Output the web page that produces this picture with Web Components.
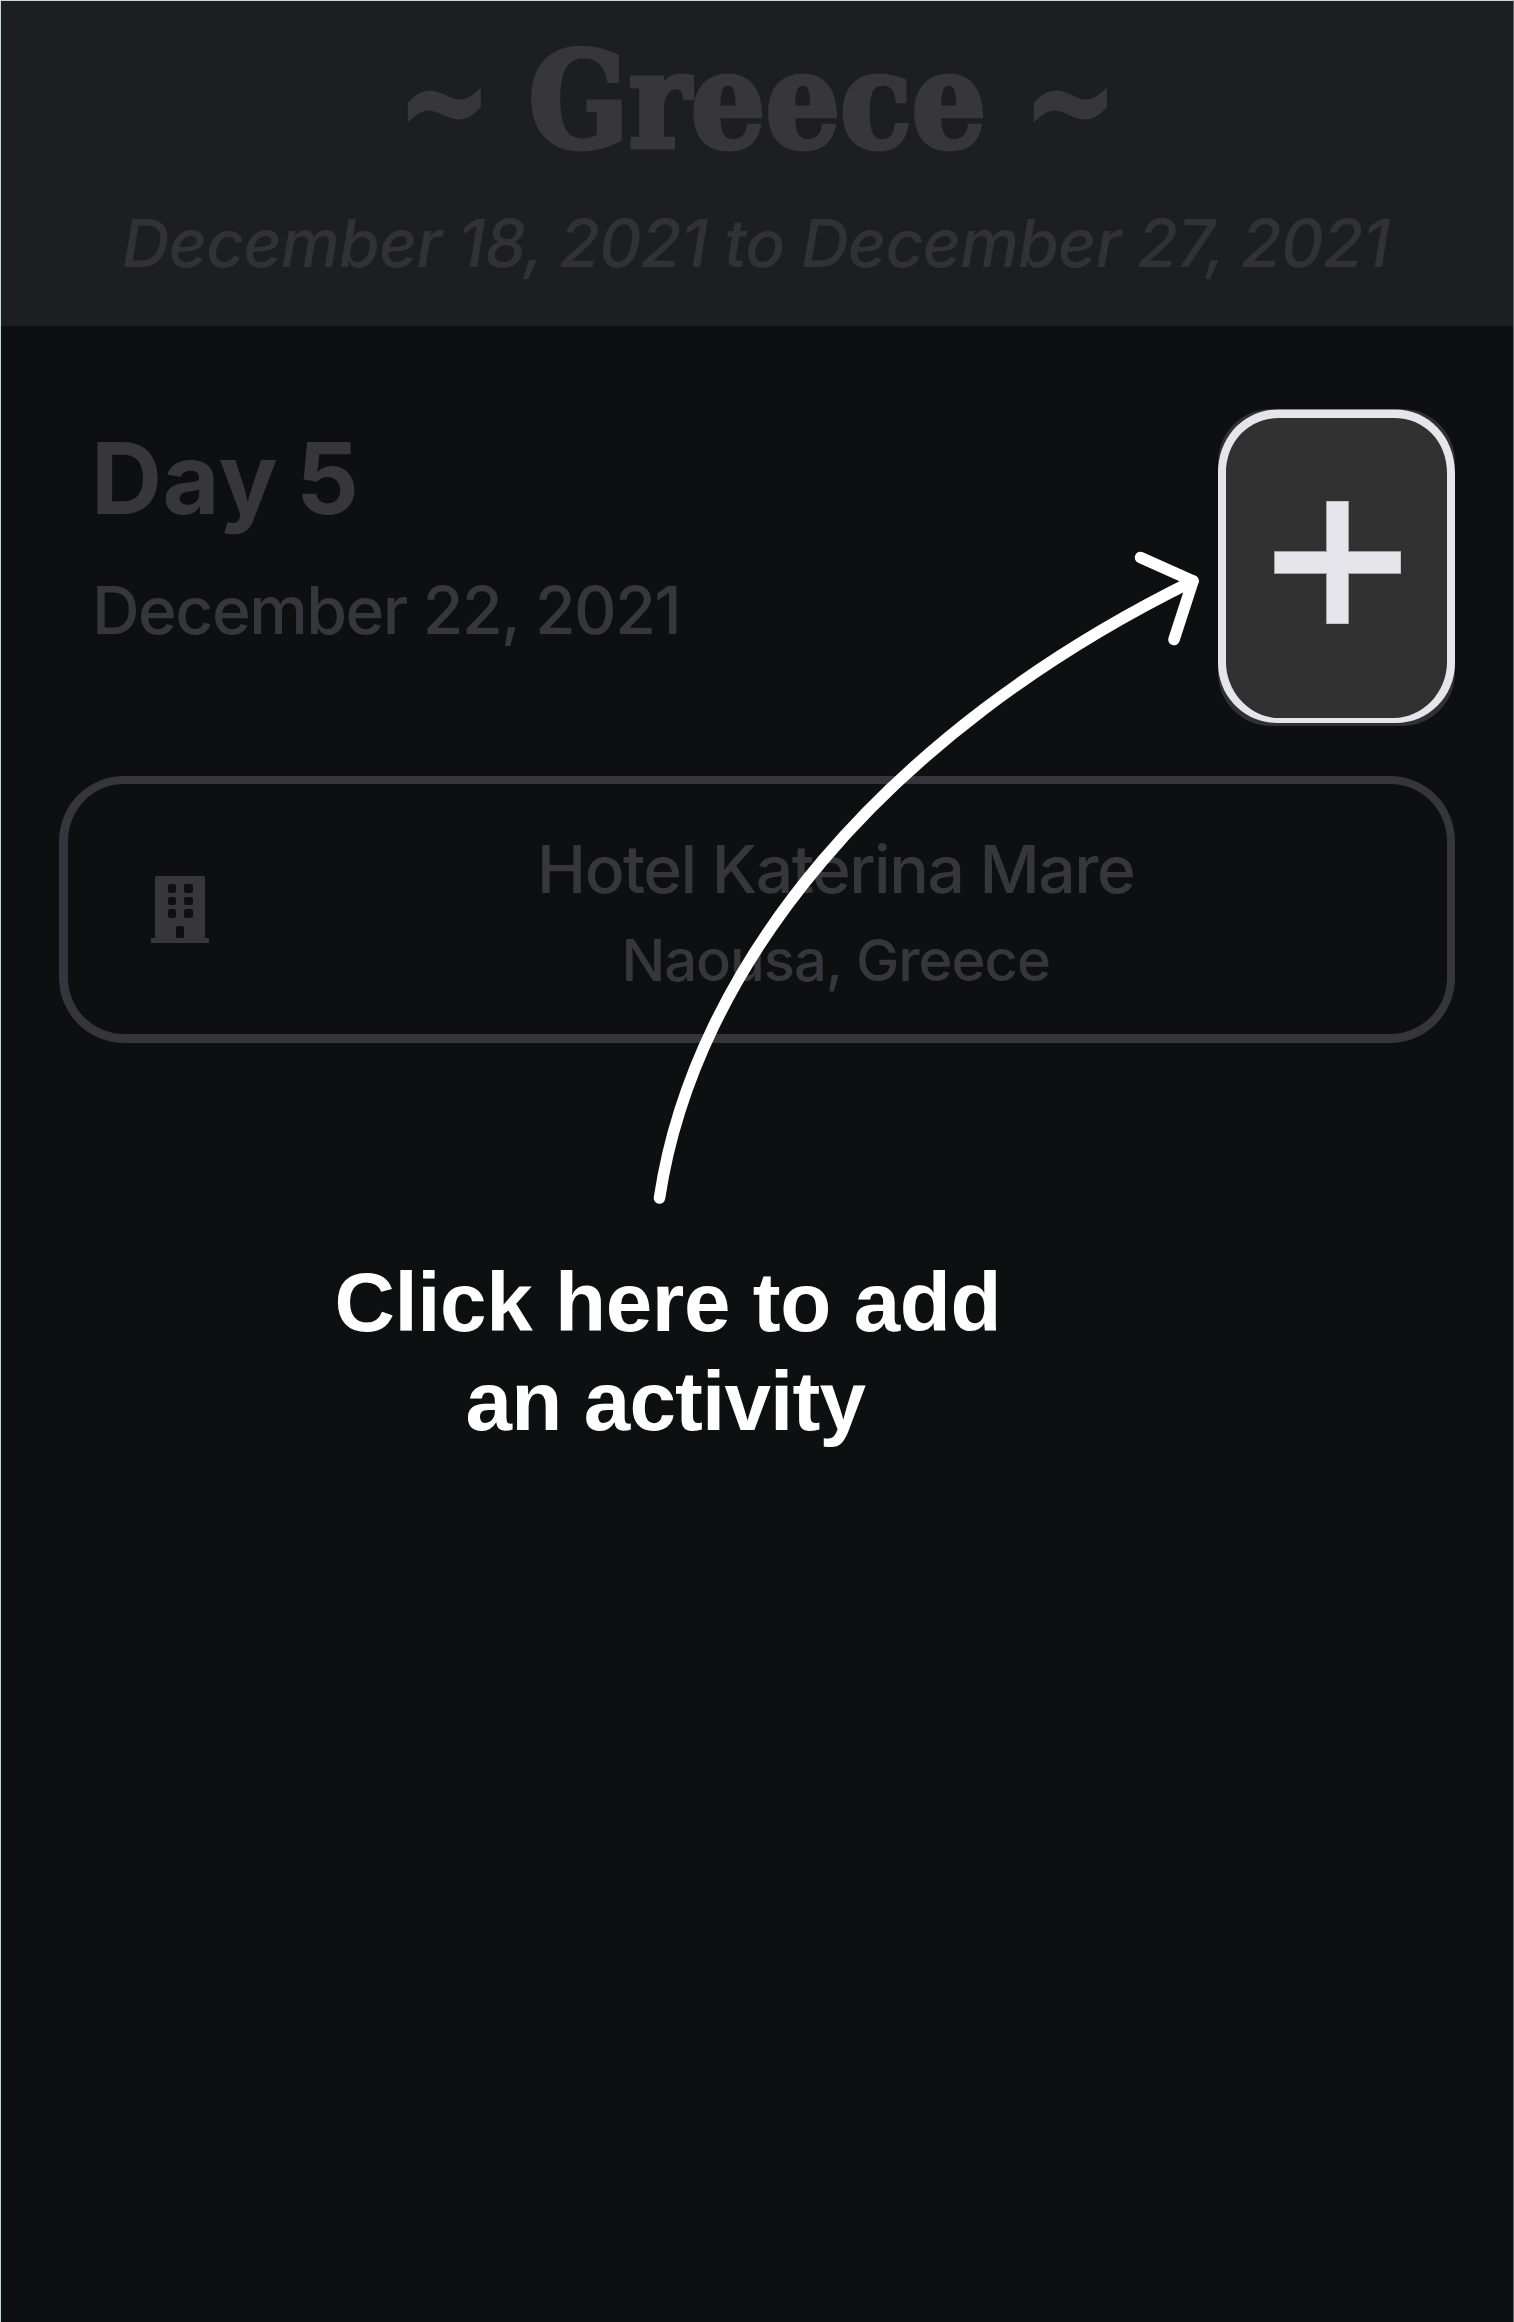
<!DOCTYPE html>
<html lang="en">
<head>
<meta charset="utf-8">
<title>Greece</title>
<style>
html,body{margin:0;height:100%;background:#0e0f11}
</style>
</head>
<body>
<trip-page>
  <trip-header slot="header">
    <fit-text slot="left" ink="70" size="132" family="DejaVu Serif" weight="700" mode="scale" class="heavy">~</fit-text>
    <fit-text slot="name" ink="448" size="132" family="DejaVu Serif" weight="700" mode="scale" class="heavy">Greece</fit-text>
    <fit-text slot="right" ink="70" size="132" family="DejaVu Serif" weight="700" mode="scale" class="heavy">~</fit-text>
    <fit-text slot="dates" ink="1268" size="66" family="Inter" weight="500" slant="italic">December 18, 2021 to December 27, 2021</fit-text>
  </trip-header>
  <day-heading>
    <fit-text slot="day" ink="258" size="98.5" family="Inter" weight="700" word="-6">Day 5</fit-text>
    <fit-text slot="date" ink="581" size="66" family="Inter" weight="500">December 22, 2021</fit-text>
    <add-button slot="action"></add-button>
  </day-heading>
  <activity-card>
    <fit-text ink="591" size="66" family="Inter" weight="500" line="78">Hotel Katerina Mare</fit-text>
    <fit-text ink="424" size="58" family="Inter" weight="500" line="104">Naousa, Greece</fit-text>
  </activity-card>
  <coach-tip>
    <fit-text ink="659" size="83.6" family="Liberation Sans" weight="700" line="99">Click here to add</fit-text>
    <fit-text ink="399" size="83.6" family="Liberation Sans" weight="700" line="99">an activity</fit-text>
  </coach-tip>
  <coach-arrow slot="overlay"></coach-arrow>
</trip-page>
<script>
const define = (name, html, init) => customElements.define(name, class extends HTMLElement {
  connectedCallback() {
    if (this.shadowRoot) return;
    const t = document.createElement('template');
    t.innerHTML = html;
    this.attachShadow({mode: 'open'}).append(t.content.cloneNode(true));
    if (init) init(this);
  }
});

// One line of text whose box is exactly as wide as its visible ink.
define('fit-text', `<style>
:host{display:block;white-space:pre;height:var(--line)}
span{display:block;width:max-content;line-height:var(--line);transform-origin:0 50%}
:host(.heavy) span{-webkit-text-stroke:5px currentColor}
</style><span></span>`, el => {
  const a = n => el.getAttribute(n), span = el.shadowRoot.querySelector('span');
  const text = el.textContent.trim(), ink = +a('ink'), word = +a('word') || 0;
  span.textContent = text;
  el.style.setProperty('--line', (a('line') || a('size')) + 'px');
  el.style.width = ink + 'px';
  span.style.fontFamily = '"' + a('family') + '", sans-serif';
  span.style.fontSize = a('size') + 'px';
  span.style.fontWeight = a('weight');
  span.style.fontStyle = a('slant') || 'normal';
  const c = document.createElement('canvas').getContext('2d');
  c.font = `${a('slant') || ''} ${a('weight')} ${a('size')}px "${a('family')}"`;
  const m = c.measureText(text), natural = m.actualBoundingBoxLeft + m.actualBoundingBoxRight;
  if (a('mode') === 'scale') {
    const k = ink / natural;
    span.style.transform = `translateX(${m.actualBoundingBoxLeft * k}px) scaleX(${k})`;
  } else {
    const spaces = text.split(' ').length - 1;
    span.style.wordSpacing = word + 'px';
    span.style.letterSpacing = (ink - natural - word * spaces) / (text.length - 1) + 'px';
    span.style.marginLeft = m.actualBoundingBoxLeft + 'px';
  }
});

define('trip-page', `<style>
:host{display:block;position:relative;box-sizing:border-box;width:1514px;height:2322px;overflow:hidden;
background:#0e0f11;border:1px solid #ced6d3;border-right-color:#68686a;border-bottom:0;color:#37363b}
</style><slot name="header"></slot><slot></slot><slot name="overlay"></slot>`);

define('trip-header', `<style>
:host{display:flex;flex-direction:column;box-sizing:border-box;height:325px;background:#1d1e22;padding-top:34px}
.title{display:flex;margin-left:408px;gap:54px;height:128px}
.dates{margin:47px 0 0 123px;color:#323136}
</style><div class="title"><slot name="left"></slot><slot name="name"></slot><slot name="right"></slot></div>
<div class="dates"><slot name="dates"></slot></div>`);

define('day-heading', `<style>
:host{display:flex;justify-content:space-between;margin:83px 58px 0 96px;height:317px}
.copy{padding-top:21px;display:flex;flex-direction:column;gap:48px}
</style><div class="copy"><slot name="day"></slot><slot name="date"></slot></div><slot name="action"></slot>`);

define('add-button', `<style>
:host{display:block;width:237px;height:317px}
svg{display:block}
</style><svg width="237" height="317" viewBox="0 0 237 317">
<rect width="237" height="317" rx="53" fill="#313131"/>
<path fill="#e5e5eb" fill-rule="evenodd" d="M60 .5H177C211 .5 237 28 237 64V254C237 288 210 314 178 314H59C27 314 0 288 0 254V64C0 28 26 .5 60 .5ZM61 9C31 9 8 32 8 64V253C8 284 33 309 61 309H176C204 309 229 284 229 253V64C229 32 206 9 176 9Z"/>
<path fill="#a3a3a7" d="M108 92h23v50h52v23h-52v50h-23v-50H56v-23h52z"/>
<path fill="#e5e5eb" d="M109 92.5h21v50.500h52.500v21h-52.500v50.500h-21v-50.500H57v-21h52z"/>
</svg>`);

define('activity-card', `<style>
:host{display:flex;box-sizing:border-box;margin:50px 58px 0 58px;height:267px;border:solid #36353b;border-width:8px 8px 9px 9px;border-radius:65px;align-items:flex-start}
svg{display:block;margin:92px 0 0 83px;flex:none}
.copy{flex:1;display:flex;flex-direction:column;align-items:center;padding:46px 0 0 19px}
</style><svg width="58" height="67" viewBox="0 0 58 67"><path fill="#37363b" d="M6 0H52Q54 0 54 2V62H57L58 63V67H0V62H4V2Q4 0 6 0Z"/>
<g fill="#0e0f11"><rect x="17" y="8" width="8" height="9" rx="2.200"/><rect x="33" y="8" width="9" height="9" rx="2.200"/><rect x="17" y="21" width="8" height="8" rx="2.200"/><rect x="33" y="21" width="9" height="8" rx="2.200"/><rect x="17" y="33" width="8" height="9" rx="2.200"/><rect x="33" y="33" width="9" height="9" rx="2.200"/><path d="M25 62V52Q25 50 27 50H31Q33 50 33 52V62Z"/></g></svg>
<div class="copy"><slot></slot></div>`);

define('coach-tip', `<style>
:host{display:flex;flex-direction:column;align-items:center;width:660px;margin:210px 0 0 336px;color:#fff}
</style><slot></slot>`);

// Drawn above the page content, from the tip up to the add button.
define('coach-arrow', `<style>
:host{position:absolute;left:-1px;top:-1px;pointer-events:none}
svg{display:block}
</style><svg width="1514" height="1300" fill="none" stroke="#fff" stroke-width="11.600" stroke-linecap="round" stroke-linejoin="round">
<path d="M659.500 1198C694 968 882 734 1193 581"/><path d="M1140.500 557.500L1193 581L1174 639.500"/></svg>`);
</script>
</body>
</html>
